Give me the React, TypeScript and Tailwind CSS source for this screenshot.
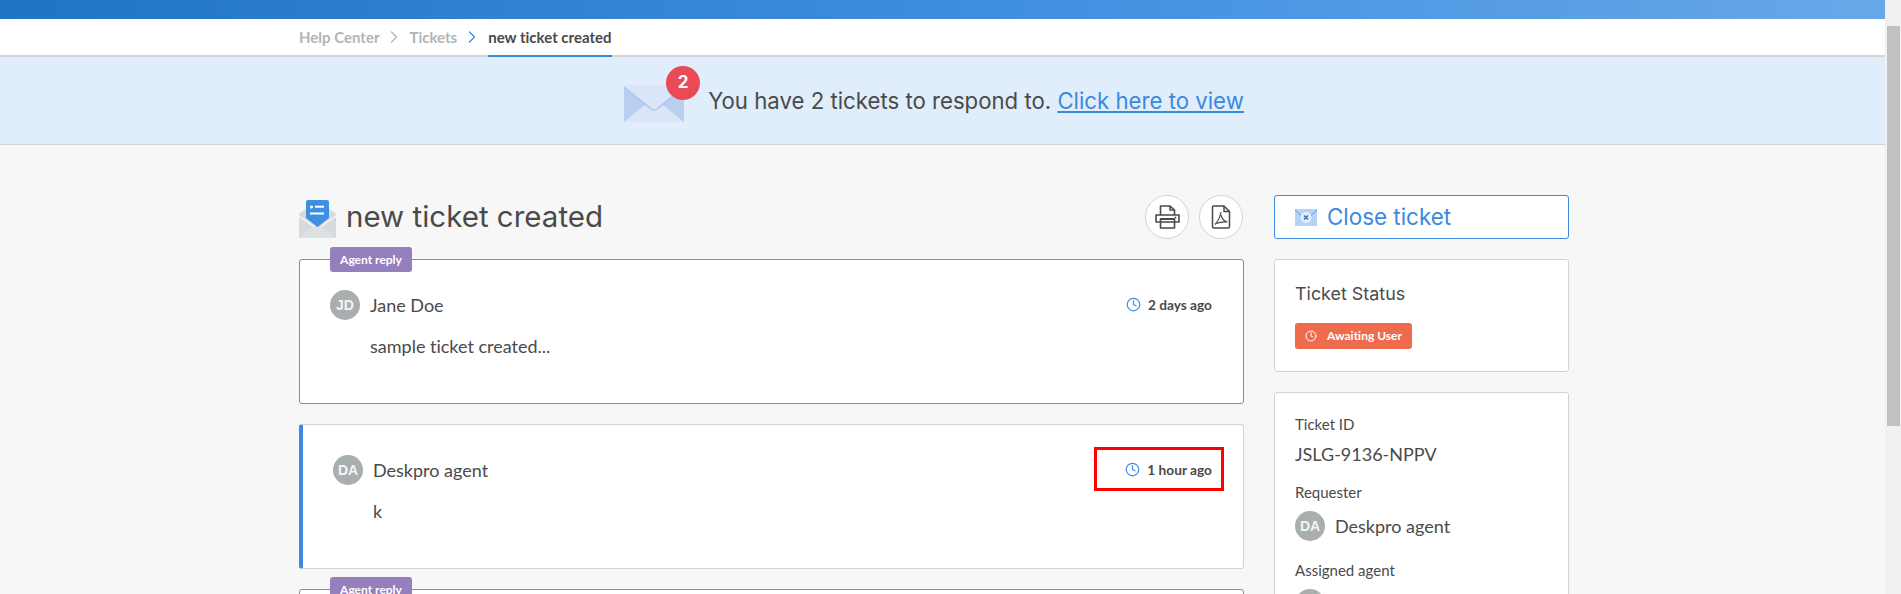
import React from "react";
import { Clock, ChevronRight } from "lucide-react";

const lato = "font-['Lato','Liberation_Sans',sans-serif] [font-variant-ligatures:none]";
const head = "font-['Inter','Noto_Sans',sans-serif]";

function Avatar({ text }: { text: string }) {
  return (
    <div className="flex h-[30px] w-[30px] shrink-0 items-center justify-center rounded-full bg-[#a9afae] font-['Liberation_Sans',sans-serif] text-[14px] font-bold text-[#f4f5f5]">
      {text}
    </div>
  );
}

function TimeAgo({ text }: { text: string }) {
  return (
    <div className="flex items-center gap-[7px] text-[13.7px] font-bold text-[#4a4a4a]">
      <Clock className="h-[15px] w-[15px] text-[#3f8fe6]" strokeWidth={2} />
      <span>{text}</span>
    </div>
  );
}

function AgentBadge() {
  return (
    <div className="absolute left-[30px] top-[-13px] flex h-[25px] w-[82px] items-center justify-center rounded-[3px] bg-[#9580bd] text-[12px] font-bold text-white">
      Agent reply
    </div>
  );
}

function MailIcon() {
  return (
    <svg width="60" height="38" viewBox="0 0 60 38" className="block">
      <rect width="60" height="37" fill="#dae5f8" />
      <path d="M0 2 L0 37 L60 37 L60 2 L30 25 Z" fill="#b9cff0" />
      <path d="M0 37 L22 19 L30 25 L38 19 L60 37 Z" fill="#dae5f8" />
      <path d="M0 2 L27 24 Q30 26 33 24 L60 2" fill="none" stroke="#a9c8f0" strokeWidth="1.5" />
    </svg>
  );
}

function TitleIcon() {
  return (
    <svg width="37" height="38" viewBox="0 0 37 38" className="block shrink-0">
      <path d="M0 14 L8 8 L29 8 L37 14 L37 38 L0 38 Z" fill="#d6dadb" />
      <path d="M0 15 L18.5 28 L37 15 L37 17 L18.5 30 L0 17 Z" fill="#f4f5f5" />
      <path d="M0 38 L15 26 L18.5 28.5 L22 26 L37 38 Z" fill="#dfe2e3" />
      <path d="M7 2 Q7 0 9 0 L28 0 Q30 0 30 2 L30 18 L18.5 27 L7 18 Z" fill="#3f8ee2" />
      <circle cx="12.5" cy="7" r="1.6" fill="#fff" />
      <rect x="16" y="5.7" width="9" height="2" fill="#fff" />
      <rect x="11" y="12.5" width="14" height="2" fill="#fff" />
    </svg>
  );
}

function PrinterIcon() {
  return (
    <svg width="25" height="24" viewBox="0 0 25 24" fill="none" stroke="#4a4a4a" strokeWidth="1.6" strokeLinejoin="round">
      <path d="M5.5 10 V1 H15 L19.5 5 V10" />
      <path d="M15 1 V5 H19.5" />
      <path d="M1 10 H24 V17 H1 Z" />
      <path d="M5.5 14 H19.5 V23 H5.5 Z" />
      <path d="M5.5 14 H19.5" strokeWidth="2" />
      <circle cx="20.5" cy="12.5" r="0.9" fill="#4a4a4a" stroke="none" />
    </svg>
  );
}

function PdfIcon() {
  return (
    <svg width="20" height="24" viewBox="0 0 20 24" fill="none" stroke="#4a4a4a" strokeWidth="1.5" strokeLinejoin="round">
      <path d="M2.5 1 H13 L18.5 6.5 V21.5 Q18.5 23 17 23 H3 Q1.5 23 1.5 21.5 V2 Q1.5 1 2.5 1 Z" />
      <path d="M13 1 V6.5 H18.5" />
      <path d="M10 7 C9 12 7.5 16 4 19.5 M10 10 C11 14 13 16 16 17 C12.5 16.5 8.5 17 5.5 18.5" strokeWidth="1.2" />
    </svg>
  );
}

function CloseMailIcon() {
  return (
    <svg width="22" height="17" viewBox="0 0 22 17" className="block shrink-0">
      <rect width="22" height="17" fill="#b4d3f5" />
      <path d="M0 1 L9 9 Q11 10.5 13 9 L22 1" fill="none" stroke="#5a9fe8" strokeWidth="1" />
      <circle cx="11" cy="8.5" r="5.5" fill="#e3eefb" />
      <path d="M9 6.5 L13 10.5 M13 6.5 L9 10.5" stroke="#2f6fc4" strokeWidth="1.5" />
    </svg>
  );
}

export default function App() {
  return (
    <div className={`flex h-[594px] w-full overflow-hidden bg-[#f1f1f1] text-[#4a4a4a] ${lato}`}>
      <div className="h-full min-w-0 flex-1 bg-[#f7f7f7]">
        <div className="h-[19px] bg-gradient-to-r from-[#1f74c4] via-[#3c8de0] to-[#67a8e8]" />

        <div className="flex h-[38px] items-stretch border-b-2 border-[#d3d3d3] bg-white pl-[299px] text-[15px] font-bold">
          <div className="flex items-center text-[#b1b5b5]">
            <span>Help Center</span>
            <ChevronRight className="mx-[5px] h-[20px] w-[20px]" strokeWidth={1.5} />
            <span>Tickets</span>
            <ChevronRight className="ml-[5px] mr-[6px] h-[20px] w-[20px] text-[#3a8ae0]" strokeWidth={1.5} />
          </div>
          <div className="-mb-[2px] flex items-center border-b-2 border-[#3a8ae0] text-[#4a4a4a]">new ticket created</div>
        </div>

        <div className={`flex h-[88px] items-center justify-center border-b border-[#d3d3d3] bg-[#e0edfb] pr-[17px] ${head}`}>
          <div className="relative mr-[24px] mt-[6px]">
            <MailIcon />
            <div className="absolute right-[-16px] top-[-19px] flex h-[34px] w-[34px] items-center justify-center rounded-full bg-[#ea4a56] text-[17px] font-bold text-white">
              2
            </div>
          </div>
          <p className="text-[22.2px] text-[#4a4a4a]">
            You have 2 tickets to respond to.{" "}
            <a className="text-[#3a8ae0] underline">Click here to view</a>
          </p>
        </div>

        <div className="flex gap-[30px] pl-[299px] pt-[50px]">
          <div className="w-[945px] shrink-0">
            <div className="flex h-[44px] items-center">
              <div className="mt-[3px]"><TitleIcon /></div>
              <h1 className={`ml-[10px] flex-1 text-[29.5px] leading-none text-[#4a4a4a] ${head}`}>new ticket created</h1>
              <div className="flex gap-[10px] pr-[1px]">
                <div className="flex h-[44px] w-[44px] items-center justify-center rounded-full border border-[#d3d3d3] bg-white">
                  <PrinterIcon />
                </div>
                <div className="flex h-[44px] w-[44px] items-center justify-center rounded-full border border-[#d3d3d3] bg-white">
                  <PdfIcon />
                </div>
              </div>
            </div>

            <div className="relative mt-[20px] h-[145px] rounded-[3px] border border-[#9180bd] bg-white pl-[30px] pr-[31px] pt-[30px]">
              <AgentBadge />
              <div className="flex items-center">
                <Avatar text="JD" />
                <span className="ml-[10px] flex-1 text-[18px]">Jane Doe</span>
                <TimeAgo text="2 days ago" />
              </div>
              <p className="mt-[13px] pl-[40px] text-[18px] leading-[26px]">sample ticket created...</p>
            </div>

            <div className="relative mt-[20px] h-[145px] rounded-[3px] border border-l-4 border-[#d3d3d3] border-l-[#3a8ae0] bg-white pl-[30px] pr-[31px] pt-[30px]">
              <div className="flex items-center">
                <Avatar text="DA" />
                <span className="ml-[10px] flex-1 text-[18px]">Deskpro agent</span>
                <TimeAgo text="1 hour ago" />
              </div>
              <p className="mt-[13px] pl-[40px] text-[18px] leading-[26px]">k</p>
              <div className="absolute left-[791px] top-[22px] h-[44px] w-[130px] border-[3px] border-[#ff0000]" />
            </div>

            <div className="relative mt-[20px] h-[144px] rounded-[3px] border border-[#9180bd] bg-white">
              <AgentBadge />
            </div>
          </div>

          <div className="w-[295px] shrink-0">
            <div className={`flex h-[44px] items-center rounded-[3px] border border-[#3a8ae0] bg-white pl-[20px] text-[22.4px] text-[#3a8ae0] ${head}`}>
              <CloseMailIcon />
              <span className="ml-[10px]">Close ticket</span>
            </div>

            <div className="mt-[20px] h-[113px] rounded-[3px] border border-[#d3d3d3] bg-white pl-[20px] pt-[22px]">
              <div className={`text-[17.9px] leading-[24px] ${head}`}>Ticket Status</div>
              <div className="mt-[17px] flex h-[26px] w-[117px] items-center rounded-[3px] bg-[#ee6c4d] pl-[10px] text-[12px] font-bold text-white">
                <Clock className="h-[12px] w-[12px]" strokeWidth={2} />
                <span className="ml-[10px]">Awaiting User</span>
              </div>
            </div>

            <div className="mt-[20px] h-[300px] rounded-[3px] border border-[#d3d3d3] bg-white pl-[20px] pt-[21px]">
              <div className="text-[15px] leading-[20px]">Ticket ID</div>
              <div className="mt-[9px] text-[18px] leading-[22px]">JSLG-9136-NPPV</div>
              <div className="mt-[17px] text-[15px] leading-[20px]">Requester</div>
              <div className="mt-[9px] flex items-center">
                <Avatar text="DA" />
                <span className="ml-[10px] text-[18px]">Deskpro agent</span>
              </div>
              <div className="mt-[19px] text-[15px] leading-[20px]">Assigned agent</div>
              <div className="mt-[9px]"><Avatar text="DA" /></div>
            </div>
          </div>
        </div>
      </div>

      <div className="h-full w-[16px] shrink-0 bg-[#f1f1f1] pl-[2px] pr-[1px] pt-[26px]">
        <div className="h-[400px] bg-[#c1c1c1]" />
      </div>
    </div>
  );
}
